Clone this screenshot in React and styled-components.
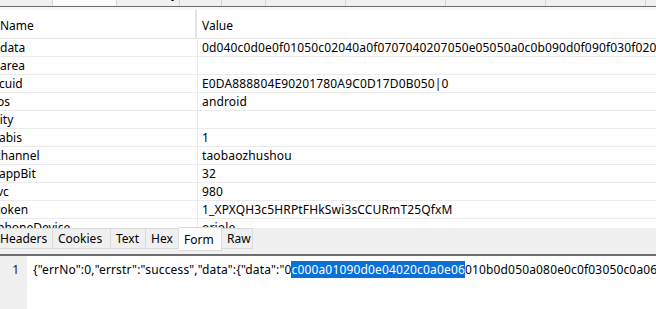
import React from 'react';
import styled, { createGlobalStyle } from 'styled-components';

const Global = createGlobalStyle`
  html, body { margin: 0; padding: 0; background: #ffffff; }
  body { font-family: "Noto Sans", "Segoe UI", sans-serif; }
`;

const Frame = styled.div`
  width: 656px;
  height: 309px;
  overflow: hidden;
  display: flex;
  flex-direction: column;
  font-family: "Noto Sans", sans-serif;
  font-size: 12px;
  color: #000;
  background: #fff;
`;

const TopStrip = styled.div`
  flex: none;
  height: 6px;
  display: flex;
  overflow: hidden;
  background: #f0f0f0;
  border-bottom: 1px solid #6a6a6a;
`;

const TopTab = styled.div`
  flex: none;
  width: ${p => p.w}px;
  box-sizing: border-box;
  height: 6px;
  overflow: hidden;
  background: ${p => (p.active ? '#fbfbfb' : '#f0f0f0')};
  border-right: 1px solid #d4d4d4;
`;

const TopLabel = styled.div`
  margin-top: -14px;
  line-height: 16px;
  padding-left: ${p => p.pad}px;
  white-space: nowrap;
`;

const Grid = styled.div`
  flex: none;
  height: 221px;
  box-sizing: border-box;
  padding-top: 3px;
  overflow: hidden;
  background: #f7f7f7;
`;

const HeaderRow = styled.div`
  display: flex;
  height: 28px;
  background: #fff;
  border-bottom: 1px solid #e6e6e6;
`;

const HeaderCell = styled.div`
  flex: ${p => (p.grow ? '1' : 'none')};
  width: ${p => (p.grow ? 'auto' : '197px')};
  box-sizing: border-box;
  padding-top: 3px;
  line-height: 25px;
  padding-left: ${p => p.pad}px;
  border-right: ${p => (p.grow ? 'none' : '2px solid #e4e4e4')};
  white-space: nowrap;
  overflow: hidden;
`;

const Row = styled.div`
  display: flex;
  height: 17px;
  background: #fff;
  border-bottom: 1px solid #ebebeb;
`;

const NameCell = styled.div`
  flex: none;
  width: 198px;
  box-sizing: border-box;
  border-right: 1px solid #ebebeb;
  line-height: 17px;
  white-space: nowrap;
  overflow: hidden;
`;

const NameText = styled.span`
  display: inline-block;
  margin-left: ${p => p.shift}px;
`;

const ValueCell = styled.div`
  flex: 1;
  padding-left: 4px;
  line-height: 17px;
  letter-spacing: 0.15px;
  white-space: nowrap;
  overflow: hidden;
`;

const TabBar = styled.div`
  flex: none;
  height: 28px;
  box-sizing: border-box;
  background: #f0f0f0;
  border-bottom: 2px solid #6e6e6e;
  display: flex;
  align-items: flex-start;
  margin-left: -5px;
`;

const Tab = styled.div`
  flex: none;
  width: ${p => p.w}px;
  box-sizing: border-box;
  height: ${p => (p.active ? 24 : 21)}px;
  margin-top: ${p => (p.active ? -1 : 0)}px;
  padding-left: 5px;
  padding-top: ${p => (p.active ? 3 : 1)}px;
  line-height: 17px;
  background: ${p => (p.active ? '#fcfcfc' : '#f0f0f0')};
  border: 1px solid #dadada;
  border-left: none;
  white-space: nowrap;
`;

const Editor = styled.div`
  flex: 1;
  display: flex;
  background: #fff;
`;

const Gutter = styled.div`
  flex: none;
  width: 27px;
  box-sizing: border-box;
  background: #f0f0f0;
  text-align: right;
  padding-right: 8px;
  padding-top: 6px;
  line-height: 16px;
  color: #222;
`;

const Code = styled.div`
  flex: 1;
  padding-left: 6px;
  padding-top: 6px;
  line-height: 16px;
  letter-spacing: 0.16px;
  white-space: nowrap;
  overflow: hidden;
`;

const Sel = styled.span`
  background: #0a6fd6;
  color: #fff;
`;

const topTabs = [
  { w: 53, label: '' },
  { w: 64, label: '', active: true },
  { w: 63, label: 'Summary', pad: 6 },
  { w: 42, label: '' },
  { w: 44, label: '' },
  { w: 80, label: '' },
  { w: 100, label: '' },
  { w: 100, label: '' },
  { w: 100, label: '' },
];

const rows = [
  { name: 'data', shift: 0, value: '0d040c0d0e0f01050c02040a0f0707040207050e05050a0c0b090d0f090f030f0205080c0e' },
  { name: 'area', shift: 0, value: '' },
  { name: 'cuid', shift: -1, value: 'E0DA888804E90201780A9C0D17D0B050|0' },
  { name: 'os', shift: -3, value: 'android' },
  { name: 'city', shift: -6, value: '' },
  { name: 'abis', shift: -1, value: '1' },
  { name: 'channel', shift: -5, value: 'taobaozhushou' },
  { name: 'appBit', shift: -1, value: '32' },
  { name: 'vc', shift: -3, value: '980' },
  { name: 'token', shift: -4, value: '1_XPXQH3c5HRPtFHkSwi3sCCURmT25QfxM' },
  { name: 'phoneDevice', shift: -3, value: 'oriole' },
];

const tabs = [
  { w: 58, label: 'Headers' },
  { w: 58, label: 'Cookies' },
  { w: 35, label: 'Text' },
  { w: 33, label: 'Hex' },
  { w: 43, label: 'Form', active: true },
  { w: 31, label: 'Raw' },
];

export default function App() {
  return (
    <>
      <Global />
      <Frame>
        <TopStrip>
          {topTabs.map((t, i) => (
            <TopTab key={i} w={t.w} active={t.active}>
              <TopLabel pad={t.pad || 6}>{t.label}</TopLabel>
            </TopTab>
          ))}
        </TopStrip>
        <Grid>
          <HeaderRow>
            <HeaderCell pad={0}>Name</HeaderCell>
            <HeaderCell grow pad={5}>Value</HeaderCell>
          </HeaderRow>
          {rows.map(r => (
            <Row key={r.name}>
              <NameCell><NameText shift={r.shift}>{r.name}</NameText></NameCell>
              <ValueCell>{r.value}</ValueCell>
            </Row>
          ))}
        </Grid>
        <TabBar>
          {tabs.map(t => (
            <Tab key={t.label} w={t.w} active={t.active}>{t.label}</Tab>
          ))}
        </TabBar>
        <Editor>
          <Gutter>1</Gutter>
          <Code>
            {'{"errNo":0,"errstr":"success","data":{"data":"0'}
            <Sel>c000a01090d0e04020c0a0e06</Sel>
            {'010b0d050a080e0c0f03050c0a060d0b0e'}
          </Code>
        </Editor>
      </Frame>
    </>
  );
}
